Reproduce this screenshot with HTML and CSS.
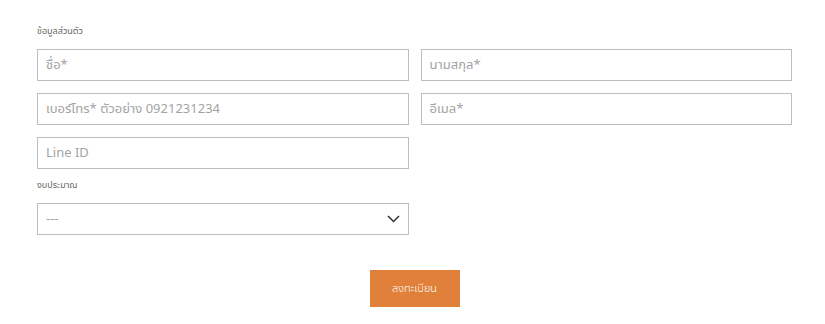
FILE: index.html
```html
<!DOCTYPE html>
<html lang="th">
<head>
<meta charset="utf-8">
<link rel="stylesheet" href="styles.css">
</head>
<body>
<form class="form">
  <div class="label first">ข้อมูลส่วนตัว</div>
  <div class="grid">
    <div class="field"><span class="ph">ชื่อ*</span></div>
    <div class="field"><span class="ph">นามสกุล*</span></div>
    <div class="field"><span class="ph">เบอร์โทร* ตัวอย่าง 0921231234</span></div>
    <div class="field"><span class="ph">อีเมล*</span></div>
    <div class="field"><span class="ph">Line ID</span></div>
  </div>
  <div class="label budget">งบประมาณ</div>
  <div class="grid">
    <div class="field select"><span class="ph">---</span>
      <svg class="chev" width="13" height="8" viewBox="0 0 13 8"><path d="M1 1 L6.5 6.5 L12 1" fill="none" stroke="#333" stroke-width="1.5"/></svg>
    </div>
  </div>
  <div class="actions"><button type="button" class="btn">ลงทะเบียน</button></div>
</form>
</body>
</html>
```
FILE: styles.css
```css
html, body { margin: 0; padding: 0; background: #fff; }
body { font-family: "Noto Sans Thai", "Noto Sans", "Liberation Sans", sans-serif; }
.form { width: 755px; margin-left: 37px; padding-top: 24px; }
.label { font-size: 9px; color: #666; line-height: 14px; }
.label.first { margin-bottom: 11px; }
.label.budget { margin-top: 9px; margin-bottom: 11px; }
.grid { display: grid; grid-template-columns: 1fr 1fr; gap: 12px; }
.field { height: 32px; box-sizing: border-box; border: 1px solid #bdbdbd; display: flex; align-items: center; padding: 0 8px; }
.ph { font-size: 13px; color: #a3a3a3; }
.select { justify-content: space-between; padding-right: 8px; }
.chev { display: block; }
.actions { display: flex; justify-content: center; margin-top: 35px; }
.btn { width: 90px; height: 37px; border: none; background: #e0803a; color: #fff; font-family: inherit; font-size: 11px; font-weight: 300; padding: 0; }
```
